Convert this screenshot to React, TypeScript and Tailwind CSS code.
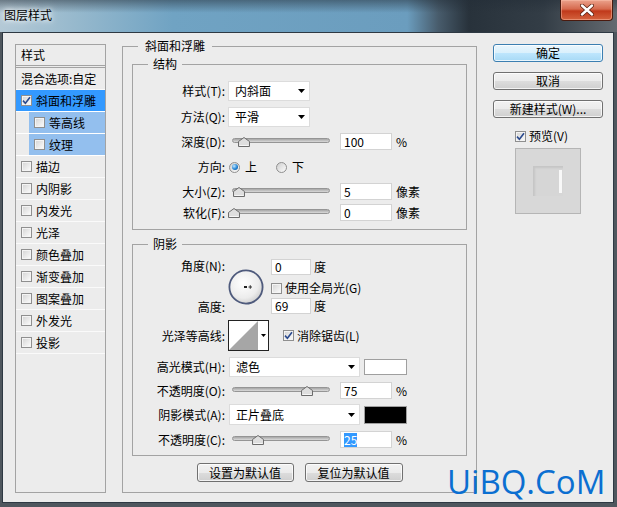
import type { ReactNode } from 'react'

const Check = ({ on = false }: { on?: boolean }) => (
  <span className="flex h-[11px] w-[11px] shrink-0 items-center justify-center border border-[#8f8f8f] bg-[linear-gradient(135deg,#d3d3d3,#fdfdfd)] shadow-[inset_0_0_0_1px_#f4f4f4]">
    {on && (
      <svg width="9" height="9" viewBox="0 0 9 9">
        <path d="M1 4.6 L3.4 7.2 L8 1.2" fill="none" stroke="#2b4a8e" strokeWidth="1.6" />
      </svg>
    )}
  </span>
)

const Radio = ({ on = false }: { on?: boolean }) => (
  <span className="flex h-[11px] w-[11px] shrink-0 items-center justify-center rounded-full border border-[#8f8f8f] bg-[linear-gradient(135deg,#cfcfcf,#fbfbfb)]">
    {on && (
      <span className="h-[6px] w-[6px] rounded-full bg-[radial-gradient(circle_at_35%_35%,#c4e8ff,#2184d6_55%,#0c4a8c)]" />
    )}
  </span>
)

const Arrow = () => (
  <svg width="7" height="4" viewBox="0 0 7 4">
    <path d="M0 0 H7 L3.5 4 Z" fill="#000" />
  </svg>
)

const Label = ({ children }: { children: ReactNode }) => (
  <span className="w-[92px] shrink-0 text-right">{children}</span>
)

const Select = ({ className, children }: { className: string; children: ReactNode }) => (
  <div
    className={`flex h-[20px] items-center justify-between border border-[#dcdcdc] bg-white pl-[6px] pr-[4px] ${className}`}
  >
    <span>{children}</span>
    <Arrow />
  </div>
)

const Field = ({ className, children }: { className: string; children: ReactNode }) => (
  <div className={`flex items-center border border-[#d3d3d3] bg-white pl-[3px] ${className}`}>{children}</div>
)

// at = thumb centre, px from the left end of the track
const Slider = ({ at }: { at: number }) => (
  <div className="relative ml-[7px] mr-[10px] -mt-[2px] h-[5px] w-[98px] rounded-[3px] border border-[#959595] bg-[linear-gradient(#a6a6a6,#dadada)]">
    <svg className="absolute top-[-2px]" style={{ left: at - 6 }} width="12" height="10" viewBox="0 0 12 10">
      <path d="M6 0.5 L11.5 4.5 V9.5 H0.5 V4.5 Z" fill="#dedede" stroke="#6c6c6c" />
      <path d="M1.5 8.5 H10.5" stroke="#f6f6f6" />
    </svg>
  </div>
)

const Btn = ({ className, children, primary = false }: { className: string; children: ReactNode; primary?: boolean }) => (
  <div
    className={`flex items-center justify-center rounded-[3px] border shadow-[inset_0_0_0_1px_rgba(255,255,255,0.75)] ${
      primary
        ? 'border-[#3c7fb1] bg-[linear-gradient(#eaf6fd_0%,#d9f0fc_50%,#bee6fd_50%,#a7d9f5_100%)]'
        : 'border-[#707070] bg-[linear-gradient(#f2f2f2_0%,#ebebeb_50%,#dddddd_50%,#cfcfcf_100%)]'
    } ${className}`}
  >
    {children}
  </div>
)

const layers = [
  { name: '斜面和浮雕', on: true, selected: true },
  { name: '等高线', sub: true },
  { name: '纹理', sub: true },
  { name: '描边' },
  { name: '内阴影' },
  { name: '内发光' },
  { name: '光泽' },
  { name: '颜色叠加' },
  { name: '渐变叠加' },
  { name: '图案叠加' },
  { name: '外发光' },
  { name: '投影' },
]

export default function App() {
  return (
    <div className="relative h-[507px] w-[617px] overflow-hidden bg-[#4f575e] font-['Noto_Sans_CJK_SC','Noto_Sans',sans-serif] text-[12px] leading-[14px] text-black">
      {/* aero title bar */}
      <div className="flex h-[32px] items-start justify-between bg-[linear-gradient(180deg,rgba(35,45,55,0.5)_0%,rgba(35,45,55,0)_40%),linear-gradient(90deg,#b4c9d6_0%,#97b9cd_12%,#70a3c3_28%,#6b9dbe_66%,#485c6c_71%,#28323b_76%,#333d46_88%,#646a70_100%)]">
        <span className="pl-[4px] pt-[8px] [text-shadow:0_0_4px_#fff,0_0_8px_#fff]">图层样式</span>
        <div className="mr-[4px] flex h-[21px] w-[53px] items-center justify-center rounded-b-[4px] border border-t-0 border-[#4a1a0e] bg-[linear-gradient(#eba28c_0%,#d66a4e_45%,#c0391b_55%,#d4633e_100%)] shadow-[inset_0_0_0_1px_rgba(255,200,180,0.45)]">
          <svg width="14" height="12" viewBox="0 0 14 12">
            <path d="M2 1.5 L12 10.5 M12 1.5 L2 10.5" stroke="#5a2010" strokeWidth="4" strokeLinecap="round" />
            <path d="M2 1.5 L12 10.5 M12 1.5 L2 10.5" stroke="#fff" strokeWidth="2.4" strokeLinecap="round" />
          </svg>
        </div>
      </div>

      {/* dialog body */}
      <div className="ml-[2px] mr-[3px] flex h-[471px] items-start border border-[#2e3943] bg-[#ececec] pl-[12px] pt-[6px]">
        {/* layer list */}
        <div className="mt-[5px] flex h-[449px] w-[91px] shrink-0 flex-col border border-[#a3a3a3]">
          <div className="flex h-[23px] items-center border-b-[3px] border-double border-[#a3a3a3] pl-[5px]">样式</div>
          <div className="flex h-[22px] items-center border-b border-[#fafafa] pl-[5px]">混合选项:自定</div>
          {layers.map((l) =>
            l.sub ? (
              <div key={l.name} className="flex h-[22px] border-b border-white">
                <div className="ml-[13px] flex flex-1 items-center bg-[#93bfee] pl-[5px]">
                  <Check />
                  <span className="ml-[4px]">{l.name}</span>
                </div>
              </div>
            ) : (
              <div
                key={l.name}
                className={`flex h-[22px] items-center border-b pl-[5px] ${
                  l.selected ? 'border-white bg-[#3399ff]' : 'border-[#fafafa]'
                }`}
              >
                <Check on={l.on} />
                <span className="ml-[4px]">{l.name}</span>
              </div>
            ),
          )}
        </div>

        {/* bevel & emboss */}
        <fieldset className="ml-[16px] w-[355px] shrink-0 border border-[#a3a3a3] px-[9px] pb-[10px] pt-[4px]">
          <legend className="ml-[6px] px-[7px] leading-[14px]">斜面和浮雕</legend>

          <fieldset className="border border-[#a3a3a3] pb-[8px] pt-[10px]">
            <legend className="ml-[15px] px-[5px] leading-[14px]">结构</legend>
            <div className="flex h-[20px] items-center">
              <Label>样式(T):</Label>
              <Select className="ml-[3px] w-[82px]">内斜面</Select>
            </div>
            <div className="mt-[6px] flex h-[20px] items-center">
              <Label>方法(Q):</Label>
              <Select className="ml-[3px] w-[82px]">平滑</Select>
            </div>
            <div className="mt-[6px] flex h-[17px] items-center">
              <Label>深度(D):</Label>
              <Slider at={10.5} />
              <Field className="h-[17px] w-[52px]">100</Field>
              <span className="ml-[4px]">%</span>
            </div>
            <div className="mt-[8px] flex h-[18px] items-center">
              <Label>方向:</Label>
              <span className="ml-[4px]">
                <Radio on />
              </span>
              <span className="ml-[5px]">上</span>
              <span className="ml-[19px]">
                <Radio />
              </span>
              <span className="ml-[5px]">下</span>
            </div>
            <div className="mt-[7px] flex h-[17px] items-center">
              <Label>大小(Z):</Label>
              <Slider at={5.5} />
              <Field className="h-[17px] w-[52px]">5</Field>
              <span className="ml-[4px]">像素</span>
            </div>
            <div className="mt-[4px] flex h-[17px] items-center">
              <Label>软化(F):</Label>
              <Slider at={0.5} />
              <Field className="h-[17px] w-[52px]">0</Field>
              <span className="ml-[4px]">像素</span>
            </div>
          </fieldset>

          <fieldset className="mt-[7px] border border-[#a3a3a3] pb-[7px] pt-[8px]">
            <legend className="ml-[15px] px-[5px] leading-[14px]">阴影</legend>
            <div className="flex items-start">
              <div className="flex h-[55px] w-[92px] shrink-0 flex-col items-end justify-between">
                <span>角度(N):</span>
                <span>高度:</span>
              </div>
              <svg className="ml-[3px] mt-[10px]" width="36" height="36" viewBox="0 0 36 36">
                <defs>
                  <radialGradient id="dial" cx="42%" cy="38%" r="65%">
                    <stop offset="0" stopColor="#ffffff" />
                    <stop offset="0.7" stopColor="#ececec" />
                    <stop offset="1" stopColor="#cdcdcd" />
                  </radialGradient>
                </defs>
                <circle cx="18" cy="18" r="16.6" fill="url(#dial)" stroke="#4e5a7c" strokeWidth="1.8" />
                <rect x="16" y="17" width="3" height="2" fill="#222" />
                <path d="M20.5 18 H24 M22.25 16.2 V19.8" stroke="#333" strokeWidth="1" />
              </svg>
              <div className="ml-[7px] flex flex-col">
                <div className="flex h-[16px] items-center">
                  <Field className="h-[16px] w-[40px]">0</Field>
                  <span className="ml-[3px]">度</span>
                </div>
                <div className="mt-[7px] flex h-[12px] items-center">
                  <Check />
                  <span className="ml-[3px]">使用全局光(G)</span>
                </div>
                <div className="mt-[4px] flex h-[16px] items-center">
                  <Field className="h-[16px] w-[40px]">69</Field>
                  <span className="ml-[3px]">度</span>
                </div>
              </div>
            </div>

            <div className="mt-[6px] flex h-[31px] items-center">
              <Label>光泽等高线:</Label>
              <div className="ml-[3px] flex h-[31px] w-[41px] border border-[#222] bg-white">
                <svg width="29" height="29" viewBox="0 0 29 29">
                  <path d="M0 29 L29 0 V29 Z" fill="#a6a6a6" />
                </svg>
                <div className="flex flex-1 items-center justify-center">
                  <svg width="5" height="3" viewBox="0 0 5 3">
                    <path d="M0 0 H5 L2.5 3 Z" fill="#000" />
                  </svg>
                </div>
              </div>
              <span className="ml-[14px]">
                <Check on />
              </span>
              <span className="ml-[3px]">消除锯齿(L)</span>
            </div>

            <div className="mt-[6px] flex h-[20px] items-center">
              <Label>高光模式(H):</Label>
              <Select className="ml-[4px] w-[131px]">滤色</Select>
              <div className="ml-[4px] h-[16px] w-[43px] border border-[#9f9f9f] bg-white" />
            </div>
            <div className="mt-[5px] flex h-[17px] items-center">
              <Label>不透明度(O):</Label>
              <Slider at={74} />
              <Field className="h-[17px] w-[52px]">75</Field>
              <span className="ml-[4px]">%</span>
            </div>
            <div className="mt-[5px] flex h-[21px] items-center">
              <Label>阴影模式(A):</Label>
              <Select className="ml-[4px] h-[21px] w-[131px]">正片叠底</Select>
              <div className="ml-[4px] h-[18px] w-[43px] border border-[#9f9f9f] bg-black" />
            </div>
            <div className="mt-[6px] flex h-[17px] items-center">
              <Label>不透明度(C):</Label>
              <Slider at={24.5} />
              <Field className="h-[17px] w-[52px]">
                <span className="bg-[#3399ff] text-white">25</span>
              </Field>
              <span className="ml-[4px]">%</span>
            </div>
          </fieldset>

          <div className="mt-[7px] flex justify-center gap-[11px]">
            <Btn className="h-[19px] w-[97px]">设置为默认值</Btn>
            <Btn className="h-[19px] w-[98px]">复位为默认值</Btn>
          </div>
        </fieldset>

        {/* right column */}
        <div className="ml-[16px] mt-[5px] flex w-[110px] shrink-0 flex-col">
          <Btn primary className="h-[18px]">确定</Btn>
          <Btn className="mt-[10px] h-[18px]">取消</Btn>
          <Btn className="mt-[10px] h-[18px]">新建样式(W)...</Btn>
          <div className="ml-[22px] mt-[12px] flex h-[12px] items-center">
            <Check on />
            <span className="ml-[3px]">预览(V)</span>
          </div>
          <div className="ml-[22px] mt-[6px] flex h-[66px] w-[66px] items-center justify-center border border-[#b5b5b5] bg-[#d8d8d8]">
            <div className="flex h-[30px] w-[30px] justify-end bg-[#d6d6d6] pr-[1px] pt-[4px] pb-[3px] shadow-[inset_2px_2px_2px_#c6c6c6]">
              <div className="w-[3px] bg-[#f8f8f8]" />
            </div>
          </div>
        </div>
      </div>

      <span className="absolute left-[447px] top-[465px] font-['Open_Sans',sans-serif] text-[33px] leading-[33px] text-[#0b6fd1]">
        UiBQ.CoM
      </span>
    </div>
  )
}
